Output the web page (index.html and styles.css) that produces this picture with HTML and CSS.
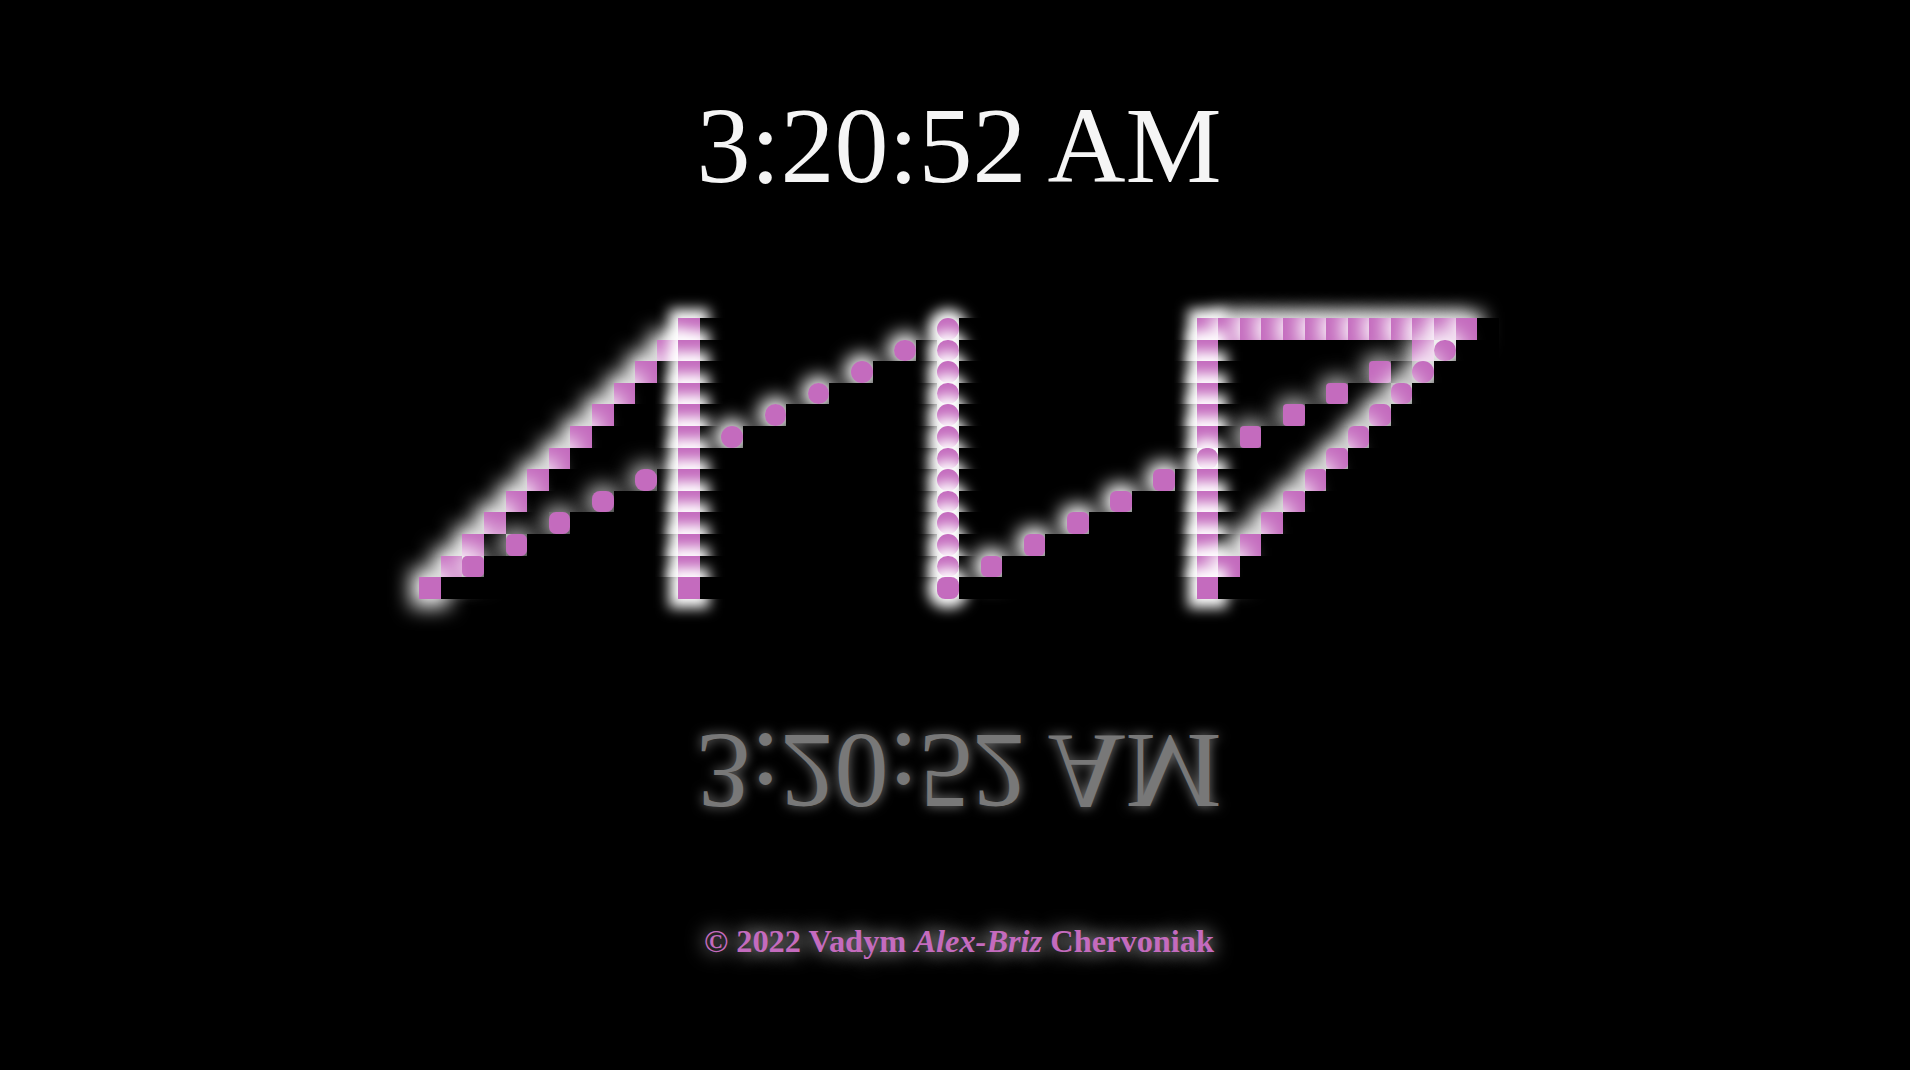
FILE: index.html
```html
<!DOCTYPE html>
<html lang="en">
<head>
    <meta charset="UTF-8">
    <meta name="viewport" content="width=device-width, initial-scale=1.0">
    <title>Clock</title>
    <link rel="stylesheet" href="styles.css">
</head>
<body>
    <div class="clock">3:20:52 AM</div>
    <div class="matrix" id="matrix"></div>
    <div class="clock reflection">3:20:52 AM</div>
    <footer class="credit">© 2022 Vadym <i>Alex-Briz</i> Chervoniak</footer>
    <script src="script.js"></script>
</body>
</html>
```

FILE: styles.css
```css
html, body {
    height: 100%;
    overflow: hidden;
}

body {
    margin: 0;
    padding-left: 8px;
    background: #000;
    font-family: "Liberation Serif", "Times New Roman", serif;
    display: flex;
    flex-direction: column;
    align-items: center;
}

.clock {
    margin-top: 85px;
    font-size: 108px;
    line-height: 122px;
    color: #f5f5f5;
}

/* 50 x 13 dots, later dots paint over the glow of earlier ones */
.matrix {
    margin-top: 111px;
    display: grid;
    grid-template-columns: repeat(50, 21.6px);
    grid-auto-rows: 21.6px;
}

.dot {
    background: #000;
}

.dot.on {
    background: #c46bbe;
}

.glow-strong { box-shadow: 0 0 13px 9px #fff; }
.glow-high { box-shadow: 0 0 20px 8px #fff; }
.glow-mid { box-shadow: 0 0 18px 7px #fff; }
.glow-top { box-shadow: 0 0 18px 6px rgba(255, 255, 255, 0.95); }
.glow-low { box-shadow: 0 0 20px 6px rgba(255, 255, 255, 0.7); }

.reflection {
    margin-top: 111px;
    color: #787878;
    transform: scaleY(-1);
    text-shadow: 0 0 12px rgba(255, 255, 255, 0.5);
}

.credit {
    margin-top: 91px;
    font-size: 32.4px;
    font-weight: bold;
    color: #c46bbe;
    text-shadow: 0 0 20px #fff;
}
```

FILE: script.js
```js
// Draws the dot matrix. Each stroke is a run of dots [row, col] from start, with a step
const strokes = [
    { from: [12, 0], step: [-1, 1], count: 12, glow: 'glow-high', radius: () => 0 },
    { from: [0, 12], step: [1, 0], count: 13, glow: 'glow-strong', radius: () => 0 },
    { from: [11, 2], step: [-1, 2], count: 5, glow: 'glow-low', radius: i => 5 + i },
    { from: [5, 14], step: [-1, 2], count: 5, glow: 'glow-mid', radius: () => 11 },
    { from: [0, 24], step: [1, 0], count: 12, glow: 'glow-strong', radius: () => 11 },
    { from: [12, 24], step: [1, 0], count: 1, glow: 'glow-strong', radius: () => 8 },
    { from: [11, 26], step: [-1, 2], count: 5, glow: 'glow-mid', radius: () => 6 },
    { from: [0, 36], step: [1, 0], count: 13, glow: 'glow-strong', radius: () => 0 },
    { from: [6, 36], step: [1, 0], count: 1, glow: 'glow-strong', radius: () => 9 },
    { from: [5, 38], step: [-1, 2], count: 4, glow: 'glow-low', radius: () => 4 },
    { from: [1, 46], step: [1, 0], count: 1, glow: 'glow-low', radius: () => 0 },
    { from: [11, 37], step: [-1, 1], count: 11, glow: 'glow-high', radius: i => i > 8 ? 11 : i },
    { from: [0, 37], step: [0, 1], count: 12, glow: 'glow-top', radius: () => 0 }
];

const lit = {};
strokes.forEach(stroke => {
    for (let i = 0; i < stroke.count; i++) {
        const row = stroke.from[0] + stroke.step[0] * i;
        const col = stroke.from[1] + stroke.step[1] * i;
        lit[row + ',' + col] = { glow: stroke.glow, radius: stroke.radius(i) };
    }
});

const matrix = document.getElementById('matrix');
for (let row = 0; row < 13; row++) {
    for (let col = 0; col < 50; col++) {
        const dot = document.createElement('div');
        dot.className = 'dot';
        const cell = lit[row + ',' + col];
        if (cell) {
            dot.classList.add('on', cell.glow);
            dot.style.borderRadius = cell.radius + 'px';
        }
        matrix.appendChild(dot);
    }
}
```
